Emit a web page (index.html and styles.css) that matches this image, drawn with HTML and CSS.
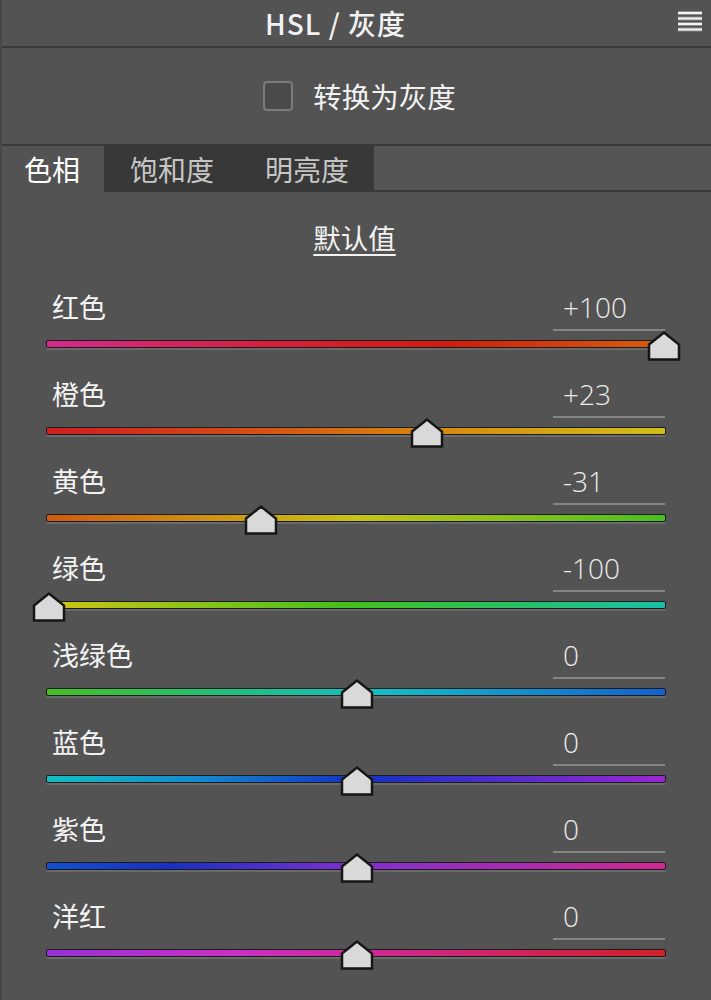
FILE: index.html
```html
<!DOCTYPE html>
<html lang="zh-CN">
<head>
<meta charset="utf-8">
<title>HSL / 灰度</title>
<link rel="stylesheet" href="styles.css">
</head>
<body>
<div class="panel">
  <header class="panel-head">
    <h1 class="panel-title">HSL / 灰度</h1>
    <svg class="menu-icon" width="28" height="22" viewBox="0 0 28 22">
      <g stroke="#8a8a8a" stroke-width="4">
        <line x1="2" y1="3" x2="26" y2="3"/>
        <line x1="2" y1="8.5" x2="26" y2="8.5"/>
        <line x1="2" y1="14" x2="26" y2="14"/>
        <line x1="2" y1="19.5" x2="26" y2="19.5"/>
      </g>
      <g stroke="#f4f4f4" stroke-width="2">
        <line x1="2" y1="3" x2="26" y2="3"/>
        <line x1="2" y1="8.5" x2="26" y2="8.5"/>
        <line x1="2" y1="14" x2="26" y2="14"/>
        <line x1="2" y1="19.5" x2="26" y2="19.5"/>
      </g>
    </svg>
  </header>

  <div class="gray-toggle">
    <span class="checkbox"></span>
    <span class="gray-label">转换为灰度</span>
  </div>

  <nav class="tabs">
    <span class="tab tab-active">色相</span>
    <span class="tab">饱和度</span>
    <span class="tab">明亮度</span>
    <span class="tab-fill"></span>
  </nav>

  <div class="defaults"><span class="defaults-link">默认值</span></div>

  <div class="sliders">
    <div class="slider">
      <div class="slider-head"><span class="slider-name">红色</span><span class="slider-value">+100</span></div>
      <div class="track t-red"><svg class="thumb" style="--p:1" width="34" height="32" viewBox="0 0 34 32"><path d="M2 14.5 L17 2.5 L32 14.5 V29.5 H2 Z"/></svg></div>
    </div>
    <div class="slider">
      <div class="slider-head"><span class="slider-name">橙色</span><span class="slider-value">+23</span></div>
      <div class="track t-orange"><svg class="thumb" style="--p:0.615" width="34" height="32" viewBox="0 0 34 32"><path d="M2 14.5 L17 2.5 L32 14.5 V29.5 H2 Z"/></svg></div>
    </div>
    <div class="slider">
      <div class="slider-head"><span class="slider-name">黄色</span><span class="slider-value">-31</span></div>
      <div class="track t-yellow"><svg class="thumb" style="--p:0.345" width="34" height="32" viewBox="0 0 34 32"><path d="M2 14.5 L17 2.5 L32 14.5 V29.5 H2 Z"/></svg></div>
    </div>
    <div class="slider">
      <div class="slider-head"><span class="slider-name">绿色</span><span class="slider-value">-100</span></div>
      <div class="track t-green"><svg class="thumb" style="--p:0" width="34" height="32" viewBox="0 0 34 32"><path d="M2 14.5 L17 2.5 L32 14.5 V29.5 H2 Z"/></svg></div>
    </div>
    <div class="slider">
      <div class="slider-head"><span class="slider-name">浅绿色</span><span class="slider-value">0</span></div>
      <div class="track t-aqua"><svg class="thumb" style="--p:0.5" width="34" height="32" viewBox="0 0 34 32"><path d="M2 14.5 L17 2.5 L32 14.5 V29.5 H2 Z"/></svg></div>
    </div>
    <div class="slider">
      <div class="slider-head"><span class="slider-name">蓝色</span><span class="slider-value">0</span></div>
      <div class="track t-blue"><svg class="thumb" style="--p:0.5" width="34" height="32" viewBox="0 0 34 32"><path d="M2 14.5 L17 2.5 L32 14.5 V29.5 H2 Z"/></svg></div>
    </div>
    <div class="slider">
      <div class="slider-head"><span class="slider-name">紫色</span><span class="slider-value">0</span></div>
      <div class="track t-purple"><svg class="thumb" style="--p:0.5" width="34" height="32" viewBox="0 0 34 32"><path d="M2 14.5 L17 2.5 L32 14.5 V29.5 H2 Z"/></svg></div>
    </div>
    <div class="slider">
      <div class="slider-head"><span class="slider-name">洋红</span><span class="slider-value">0</span></div>
      <div class="track t-magenta"><svg class="thumb" style="--p:0.5" width="34" height="32" viewBox="0 0 34 32"><path d="M2 14.5 L17 2.5 L32 14.5 V29.5 H2 Z"/></svg></div>
    </div>
  </div>
</div>
</body>
</html>
```

FILE: styles.css
```css
html, body {
  margin: 0;
  padding: 0;
  background: #535353;
}

.panel {
  width: 711px;
  height: 1000px;
  box-sizing: border-box;
  border-left: 2px solid #474747;
  background: #535353;
  color: #f2f2f2;
  font-family: "Noto Sans CJK SC", "Noto Sans", sans-serif;
  overflow: hidden;
}

/* title bar */
.panel-head {
  position: relative;
  height: 46px;
  border-bottom: 2px solid #3a3a3a;
  display: flex;
  align-items: center;
  justify-content: center;
  padding-right: 42px;
}

.panel-title {
  margin: 0;
  font-size: 28px;
  font-weight: 500;
  line-height: 42px;
  letter-spacing: 1px;
}

.menu-icon {
  position: absolute;
  right: 7px;
  top: 10px;
}

/* convert to grayscale */
.gray-toggle {
  height: 96px;
  display: flex;
  align-items: center;
  justify-content: center;
  gap: 20px;
}

.checkbox {
  width: 26px;
  height: 26px;
  border: 2px solid #7c7c7c;
  border-radius: 4px;
  background: #4b4b4b;
  box-sizing: content-box;
  margin-left: 6px;
}

.gray-label {
  font-size: 28.5px;
  line-height: 40px;
  margin-top: -1px;
}

/* tabs */
.tabs {
  display: flex;
  height: 46px;
  border-top: 2px solid #3a3a3a;
}

.tab {
  display: flex;
  align-items: center;
  padding: 0 25px 0 26px;
  font-size: 28px;
  background: #383838;
  color: #c6c6c6;
  height: 46px;
}

.tab-active {
  background: #535353;
  color: #ffffff;
  padding: 0 24px 0 22px;
}

.tab-fill {
  flex: 1;
  background: #555555;
  border-bottom: 2px solid #3a3a3a;
  height: 44px;
}

/* default link */
.defaults {
  height: 72px;
  box-sizing: border-box;
  padding-top: 27px;
  text-align: center;
}

.defaults-link {
  font-size: 27.5px;
  line-height: 36px;
  text-decoration: underline;
  text-underline-offset: 5px;
  text-decoration-thickness: 2px;
  margin-left: -4px;
}

/* slider rows */
.slider {
  height: 87px;
  box-sizing: border-box;
  padding-top: 23px;
}

.slider-head {
  display: flex;
  justify-content: space-between;
  align-items: flex-start;
  height: 44px;
  padding-left: 50px;
  padding-right: 46px;
}

.slider-name {
  font-size: 27px;
  line-height: 40px;
}

.slider-value {
  width: 102px;
  padding-left: 10px;
  padding-bottom: 2px;
  font-size: 28px;
  line-height: 40px;
  color: #ececec;
  border-bottom: 2px solid #858585;
  font-family: "Open Sans", "Noto Sans", sans-serif;
  font-weight: 300;
}

.track {
  position: relative;
  margin: 9px 0 0 44px;
  width: 618px;
  height: 6px;
  border: 1px solid #1b1b1b;
  border-radius: 2px;
  box-shadow: 0 2px 0 #6a6a6a;
}

.thumb {
  position: absolute;
  top: -11px;
  left: calc(var(--p) * 615px - 15px);
}

.thumb path {
  fill: #d9d9d9;
  stroke: #161616;
  stroke-width: 2.5;
  stroke-linejoin: miter;
}

.t-red     { background: linear-gradient(90deg, #d42a8e 0%, #d5203c 35%, #d01c10 65%, #d8600c 100%); }
.t-orange  { background: linear-gradient(90deg, #cf1e20 0%, #d44818 30%, #d8840e 60%, #cfc01a 100%); }
.t-yellow  { background: linear-gradient(90deg, #d05a10 0%, #d09010 25%, #c8c414 50%, #48c020 100%); }
.t-green   { background: linear-gradient(90deg, #cfc410 0%, #88c418 25%, #40c020 50%, #18c0a8 100%); }
.t-aqua    { background: linear-gradient(90deg, #46c020 0%, #20c080 30%, #12bcc8 55%, #1460d0 100%); }
.t-blue    { background: linear-gradient(90deg, #12c0c0 0%, #1488d0 25%, #1232c4 50%, #9a26d4 100%); }
.t-purple  { background: linear-gradient(90deg, #1250d0 0%, #1830c4 20%, #8030d0 50%, #d02890 100%); }
.t-magenta { background: linear-gradient(90deg, #9a30d4 0%, #c830c8 30%, #d02890 55%, #d02026 100%); }
```
